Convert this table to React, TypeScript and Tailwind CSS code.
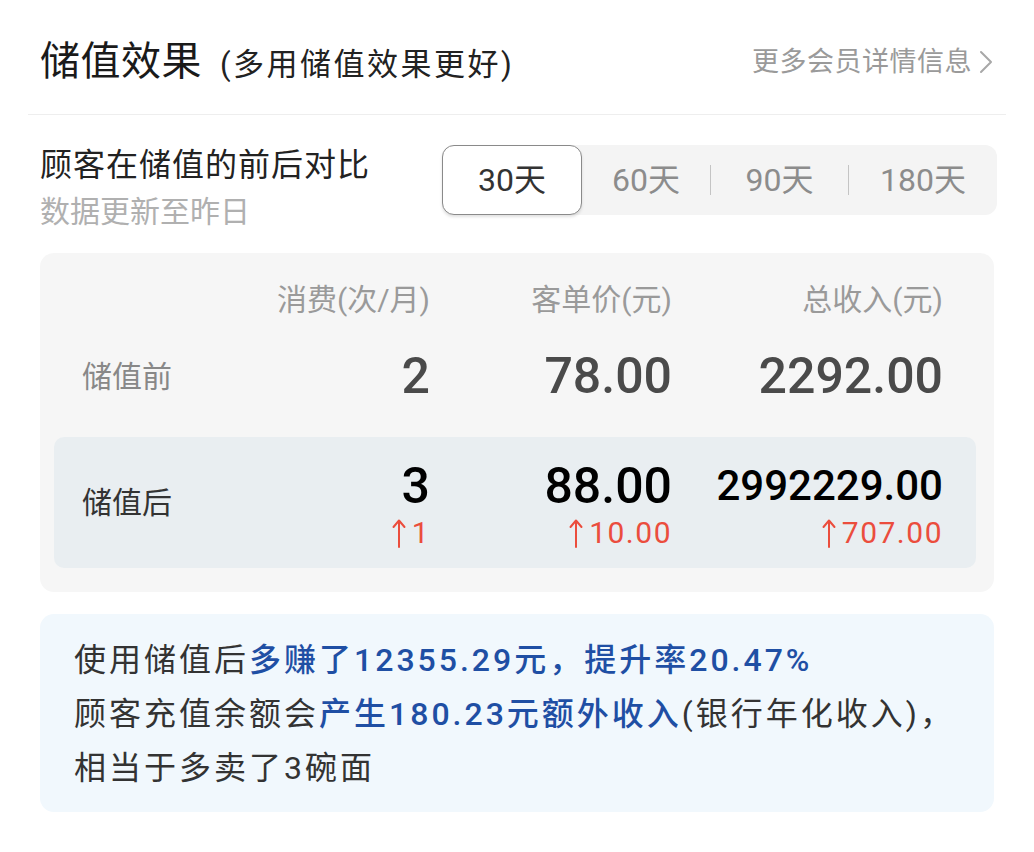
const ROWS = {
  header: ["消费(次/月)", "客单价(元)", "总收入(元)"],
  before: ["2", "78.00", "2292.00"],
  after: [
    { value: "3", diff: "1", size: "text-[50px]" },
    { value: "88.00", diff: "10.00", size: "text-[50px]" },
    { value: "2992229.00", diff: "707.00", size: "text-[42px]" },
  ],
};

const PERIODS = ["60天", "90天", "180天"];

function UpArrow() {
  return (
    <svg width="14" height="30" viewBox="0 0 14 30" fill="none" className="mr-[6px]">
      <path d="M7 29V3" stroke="#eb4d3d" strokeWidth="2" strokeLinecap="round" />
      <path d="M1.5 9L7 2.5L12.5 9" stroke="#eb4d3d" strokeWidth="2" strokeLinecap="round" strokeLinejoin="round" />
    </svg>
  );
}

export default function App() {
  return (
    <div className="min-h-screen bg-white font-['Roboto','Noto_Sans_CJK_SC',sans-serif]">
      <div className="px-[40px] pt-[34px] pb-[40px]">
        {/* title */}
        <div className="flex h-[56px] items-center justify-between">
          <div className="flex items-baseline">
            <span className="text-[40px] tracking-[0.5px] text-[#1a1a1a]">储值效果</span>
            <span className="ml-[18px] text-[31px] tracking-[2.5px] text-[#222]">(多用储值效果更好)</span>
          </div>
          <div className="flex items-center text-[27px] tracking-[0.5px] text-[#9a9a9a]">
            更多会员详情信息
            <svg width="16" height="26" viewBox="0 0 16 26" fill="none" className="ml-[6px]">
              <path d="M3 3L13 13L3 23" stroke="#a8a8a8" strokeWidth="2" strokeLinecap="round" strokeLinejoin="round" />
            </svg>
          </div>
        </div>

        <div className="-mx-[12px] mt-[24px] h-px bg-[#eeeeee]" />

        {/* comparison header */}
        <div className="mt-[28px] flex items-start justify-between">
          <div>
            <p className="text-[32px] leading-[44px] tracking-[1px] text-[#222]">顾客在储值的前后对比</p>
            <p className="mt-[5px] text-[30px] leading-[40px] text-[#b0b0b0]">数据更新至昨日</p>
          </div>
          <div className="mt-[2px] mr-[-3px] flex h-[70px] w-[555px] items-center rounded-[12px] bg-[#f4f4f4] text-[32px] text-[#8c8c8c]">
            <div className="flex h-full w-[140px] items-center justify-center rounded-[12px] border-[1.5px] border-[#8a8a8a] bg-white text-[#333] shadow-[0_2px_3px_rgba(0,0,0,0.12)]">
              30天
            </div>
            {PERIODS.map((p, i) => (
              <div key={p} className={`flex items-center ${i === 2 ? "flex-1" : ""}`}>
                {i > 0 && <div className="h-[30px] w-px bg-[#c4c4c4]" />}
                <span className={`text-center ${i === 0 ? "w-[128px]" : i === 1 ? "w-[137px]" : "flex-1"}`}>{p}</span>
              </div>
            ))}
          </div>
        </div>

        {/* table */}
        <div className="mt-[21px] rounded-[14px] bg-[#f6f6f6] pt-[27px] pr-[18px] pb-[24px] pl-[14px]">
          <div className="grid grid-cols-[148px_200px_242px_271px] pl-[28px] text-right text-[30px] leading-[40px] text-[#9a9a9a]">
            <span />
            {ROWS.header.map((h) => (
              <span key={h}>{h}</span>
            ))}
          </div>

          <div className="grid h-[112px] grid-cols-[148px_200px_242px_271px] items-center pl-[28px]">
            <span className="text-[30px] text-[#888]">储值前</span>
            {ROWS.before.map((v) => (
              <span key={v} className="text-right text-[50px] font-medium leading-[56px] text-[#4a4a4a]">
                {v}
              </span>
            ))}
          </div>

          <div className="mt-[5px] grid h-[131px] grid-cols-[148px_200px_242px_271px] items-center rounded-[10px] bg-[#e9eef1] pl-[28px]">
            <span className="text-[30px] text-[#333]">储值后</span>
            {ROWS.after.map((c) => (
              <div key={c.value} className="flex flex-col items-end pt-[7px]">
                <span className={`${c.size} font-medium leading-[50px] text-black`}>{c.value}</span>
                <span className="mt-[4px] flex items-center text-[30px] leading-[36px] tracking-[1.5px] text-[#eb4d3d]">
                  <UpArrow />
                  {c.diff}
                </span>
              </div>
            ))}
          </div>
        </div>

        {/* summary */}
        <div className="mt-[22px] rounded-[14px] bg-[#f1f8fd] pt-[19px] pb-[17px] pl-[34px] text-[32px] leading-[54px] tracking-[3px] text-[#333]">
          <p>
            使用储值后<span className="font-medium text-[#1f4fa4]">多赚了12355.29元，提升率20.47%</span>
          </p>
          <p>
            顾客充值余额会<span className="font-medium text-[#1f4fa4]">产生180.23元额外收入</span>(银行年化收入)，
          </p>
          <p>相当于多卖了3碗面</p>
        </div>
      </div>
    </div>
  );
}
